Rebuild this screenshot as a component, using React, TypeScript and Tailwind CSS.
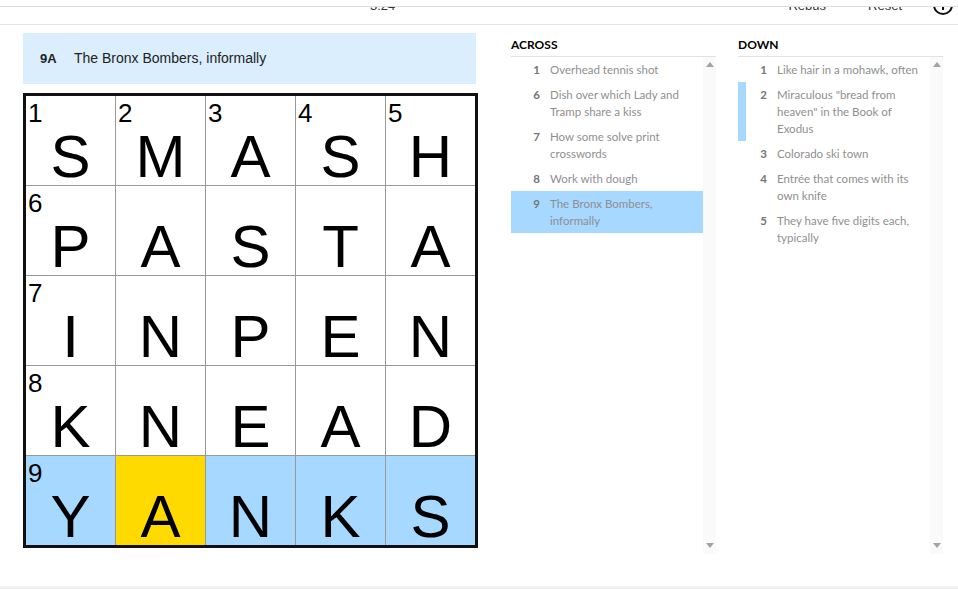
const LETTERS = [
  ['S', 'M', 'A', 'S', 'H'],
  ['P', 'A', 'S', 'T', 'A'],
  ['I', 'N', 'P', 'E', 'N'],
  ['K', 'N', 'E', 'A', 'D'],
  ['Y', 'A', 'N', 'K', 'S'],
]

const NUMBERS: Record<string, number> = {
  '0-0': 1,
  '0-1': 2,
  '0-2': 3,
  '0-3': 4,
  '0-4': 5,
  '1-0': 6,
  '2-0': 7,
  '3-0': 8,
  '4-0': 9,
}

const ACROSS = [
  { n: 1, text: 'Overhead tennis shot' },
  { n: 6, text: 'Dish over which Lady and Tramp share a kiss' },
  { n: 7, text: 'How some solve print crosswords' },
  { n: 8, text: 'Work with dough' },
  { n: 9, text: 'The Bronx Bombers, informally' },
]

const DOWN = [
  { n: 1, text: 'Like hair in a mohawk, often' },
  { n: 2, text: 'Miraculous "bread from heaven" in the Book of Exodus' },
  { n: 3, text: 'Colorado ski town' },
  { n: 4, text: 'Entrée that comes with its own knife' },
  { n: 5, text: 'They have five digits each, typically' },
]

const ArrowUp = () => (
  <svg width="8" height="5" viewBox="0 0 8 5">
    <path d="M4 0 L8 5 L0 5 Z" fill="#a3a3a3" />
  </svg>
)

const ArrowDown = () => (
  <svg width="8" height="5" viewBox="0 0 8 5">
    <path d="M0 0 L8 0 L4 5 Z" fill="#a3a3a3" />
  </svg>
)

type Clue = { n: number; text: string }

const ClueList = ({
  title,
  clues,
  active,
  related,
}: {
  title: string
  clues: Clue[]
  active?: number
  related?: number
}) => (
  <div className="w-[205px] shrink-0 flex flex-col">
    <div className="h-[24px] flex items-center border-b border-[#e2e2e2] text-[12px] font-bold text-black font-['Lato',sans-serif]">
      {title}
    </div>
    <div className="h-[497px] flex">
      <ul className="flex-1 font-['Lato',sans-serif] text-[11.5px] leading-[17px]">
        {clues.map((c) => (
          <li
            key={c.n}
            className={`flex gap-[10px] py-1 border-l-8 pr-[9px] ${
              c.n === active ? 'bg-[#a7d8ff] border-[#a7d8ff]' : ''
            } ${c.n === related ? 'border-[#a7d8ff]' : 'border-transparent'}`}
          >
            <span className="w-[21px] shrink-0 text-right font-bold text-[#757575]">{c.n}</span>
            <span className="text-[#8f8f8f]">{c.text}</span>
          </li>
        ))}
      </ul>
      <div className="w-[13px] bg-[#fafafa] flex flex-col items-center justify-between pt-[5px] pb-[6px]">
        <ArrowUp />
        <ArrowDown />
      </div>
    </div>
  </div>
)

export default function App() {
  return (
    <div className="w-[958px] h-[590px] bg-white overflow-hidden font-['Liberation_Sans',Arial,sans-serif]">
      {/* toolbar, scrolled mostly out of view */}
      <div className="h-[7px] border-b border-[#dedede]" />
      <div className="h-[18px] border-b border-[#e4e4e4] overflow-hidden">
        <div className="-mt-[21px] h-[40px] flex items-center text-[13px] text-[#333]">
          <div className="w-[370px]" />
          <span>3:24</span>
          <div className="flex-1" />
          <span>Rebus</span>
          <span className="ml-[42px]">Reset</span>
          <svg className="ml-[31px] mr-[5px] mb-[3px]" width="20" height="20" viewBox="0 0 20 20">
            <circle cx="10" cy="10" r="9" fill="none" stroke="#111" strokeWidth="2" />
            <path d="M10 9 V15" stroke="#111" strokeWidth="2" />
          </svg>
        </div>
      </div>

      <div className="h-[561px] flex pl-[23px] pt-[8px]">
        <div className="w-[455px] shrink-0">
          <div className="w-[453px] h-[51px] bg-[#dbeefe] flex items-center px-[17px] text-[14px] text-[#222]">
            <span className="font-bold text-[13px] w-[34px]">9A</span>
            <span>The Bronx Bombers, informally</span>
          </div>
          <div className="mt-[9px] border-[3px] border-[#111] bg-[#999] grid grid-cols-5 gap-px">
            {LETTERS.map((row, r) =>
              row.map((ch, c) => {
                const num = NUMBERS[`${r}-${c}`]
                const bg = r === 4 ? (c === 1 ? 'bg-[#ffda00]' : 'bg-[#a7d8ff]') : 'bg-white'
                return (
                  <div key={`${r}-${c}`} className={`relative h-[89px] ${bg}`}>
                    {num && (
                      <span className="absolute left-[2px] top-[4px] text-[26px] leading-[26px] text-black">
                        {num}
                      </span>
                    )}
                    <div className="pt-[33px] text-center text-[60px] leading-[56px] text-black">{ch}</div>
                  </div>
                )
              })
            )}
          </div>
        </div>

        <div className="ml-[33px] flex gap-[22px]">
          <ClueList title="ACROSS" clues={ACROSS} active={9} />
          <ClueList title="DOWN" clues={DOWN} related={2} />
        </div>
      </div>

      <div className="h-[3px] bg-[#f0f0f0]" />
    </div>
  )
}
